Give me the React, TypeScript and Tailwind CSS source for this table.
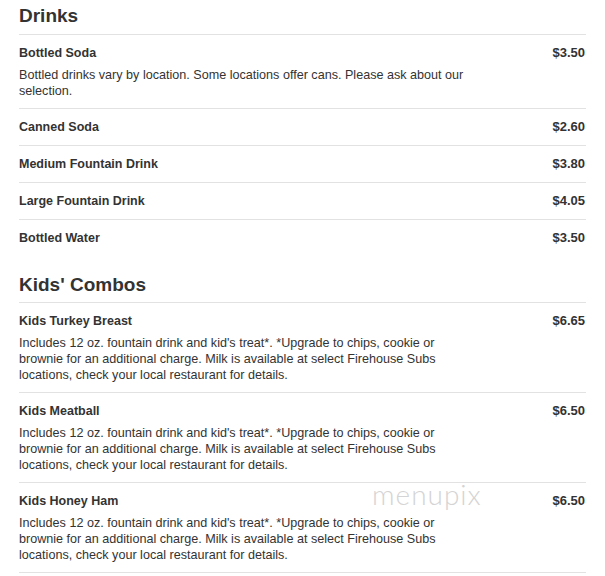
import React from "react";

type Item = { name: string; price: string; desc?: string };

const drinks: Item[] = [
  {
    name: "Bottled Soda",
    price: "$3.50",
    desc: "Bottled drinks vary by location. Some locations offer cans. Please ask about our selection.",
  },
  { name: "Canned Soda", price: "$2.60" },
  { name: "Medium Fountain Drink", price: "$3.80" },
  { name: "Large Fountain Drink", price: "$4.05" },
  { name: "Bottled Water", price: "$3.50" },
];

const kidsDesc =
  "Includes 12 oz. fountain drink and kid's treat*. *Upgrade to chips, cookie or brownie for an additional charge. Milk is available at select Firehouse Subs locations, check your local restaurant for details.";

const kids: Item[] = [
  { name: "Kids Turkey Breast", price: "$6.65", desc: kidsDesc },
  { name: "Kids Meatball", price: "$6.50", desc: kidsDesc },
  { name: "Kids Honey Ham", price: "$6.50", desc: kidsDesc },
];

function Row({ item }: { item: Item }) {
  return (
    <div className="flex justify-between border-t border-[#e2e2e2] pt-[9px] pb-[9px]">
      <div className="flex flex-col">
        <div className="text-[12.5px] leading-[18px] font-bold text-[#333]">{item.name}</div>
        {item.desc && (
          <div className="mt-[5px] w-[452px] text-[12.6px] leading-[16px] text-[#333]">{item.desc}</div>
        )}
      </div>
      <div className="text-[13px] leading-[18px] font-bold text-[#333] pr-[1px]">{item.price}</div>
    </div>
  );
}

export default function App() {
  return (
    <div
      className="relative bg-white px-[19px] pt-[4px]"
      style={{ fontFamily: '"Liberation Sans", Arial, sans-serif' }}
    >
      <h2 className="text-[19px] leading-[24px] font-bold text-[#333] mb-[6px]">Drinks</h2>
      {drinks.map((d) => (
        <Row key={d.name} item={d} />
      ))}
      <h2 className="mt-[17px] text-[19px] leading-[24px] font-bold text-[#333] mb-[5px]">Kids' Combos</h2>
      {kids.map((d) => (
        <Row key={d.name} item={d} />
      ))}
      <div className="border-t border-[#e2e2e2] h-[20px]" />
      <div
        className="absolute left-[372px] top-[477px] text-[28px] leading-[34px] font-light text-[#d4d4d4] tracking-[1px]"
        style={{ fontFamily: "Lato, sans-serif" }}
      >
        menupix
      </div>
    </div>
  );
}
